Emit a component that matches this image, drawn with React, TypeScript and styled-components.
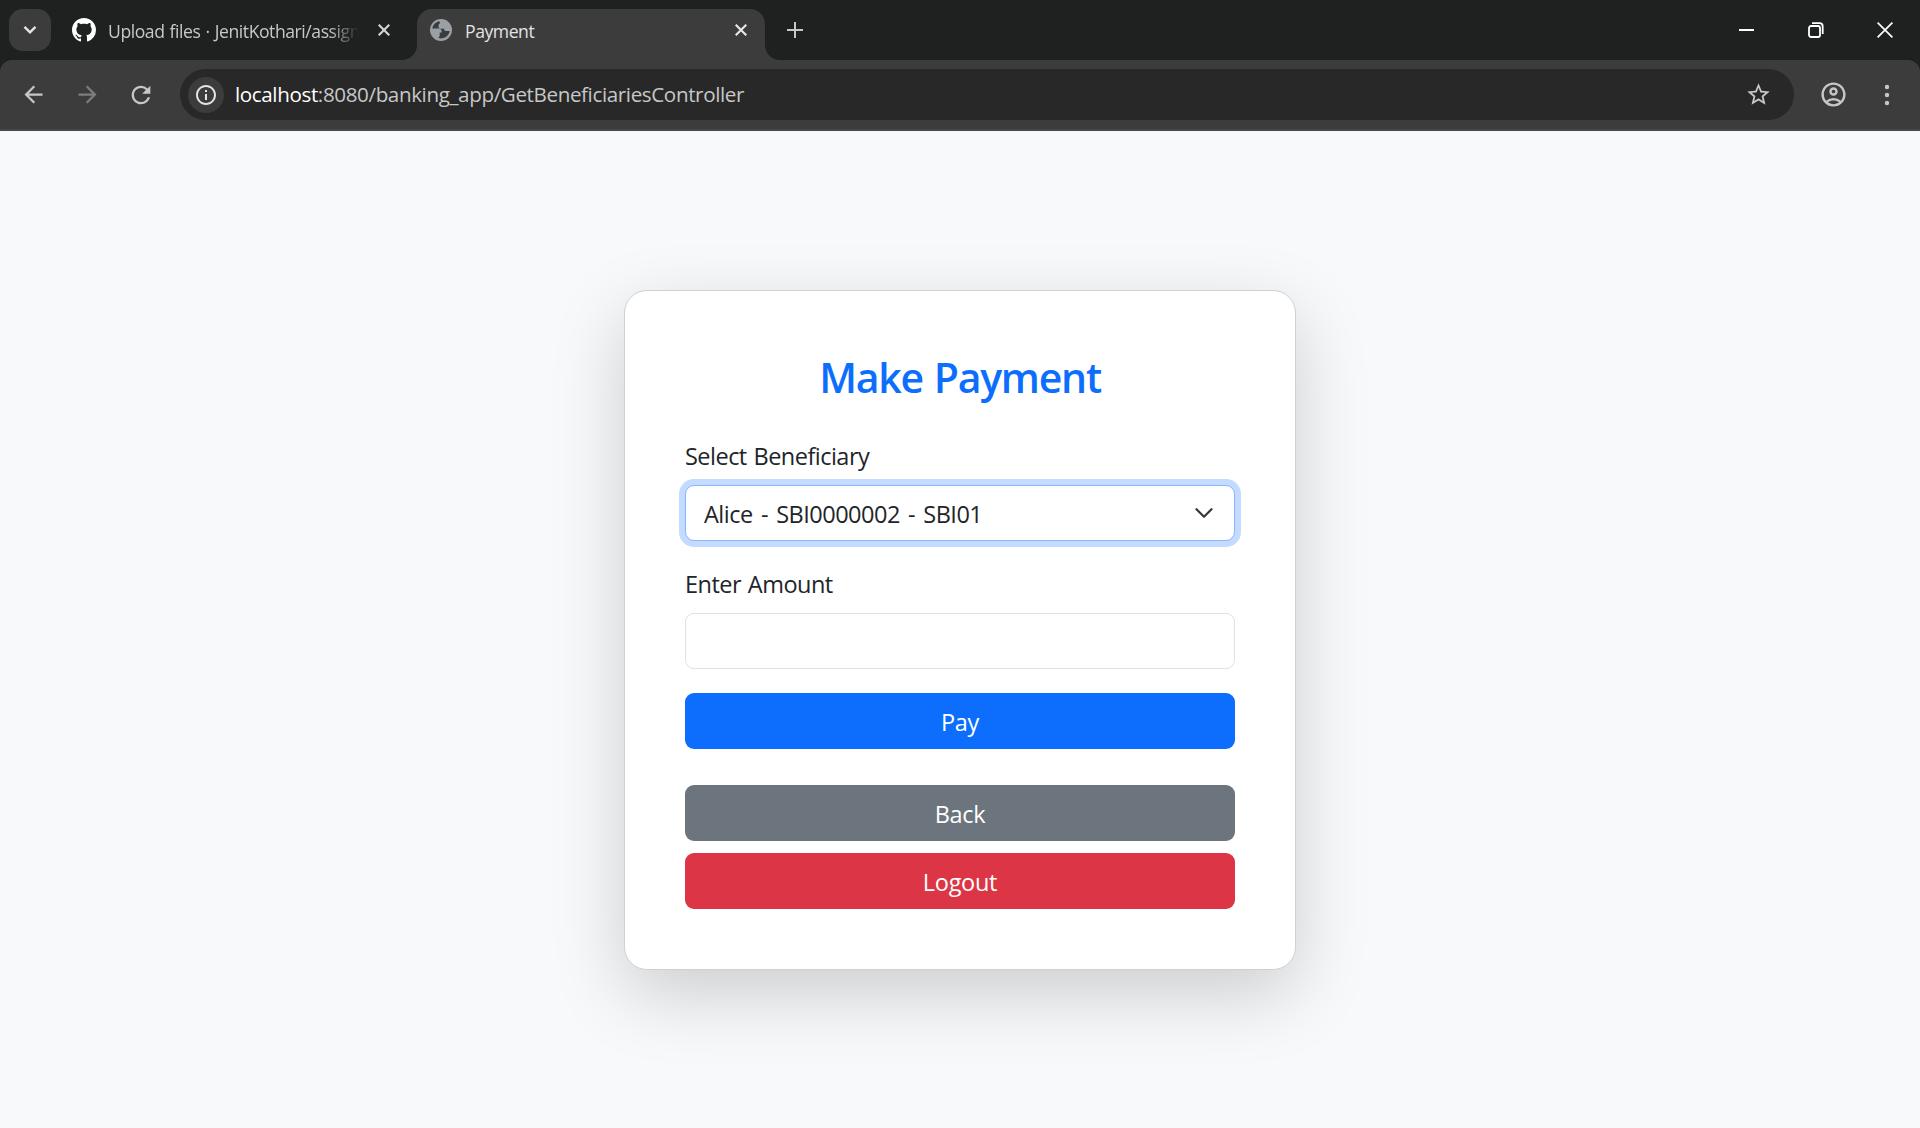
import React from "react";
import styled, { createGlobalStyle } from "styled-components";
import {
  MdArrowBack,
  MdArrowForward,
  MdInfoOutline,
  MdOutlineAccountCircle,
  MdRefresh,
  MdStarBorder,
} from "react-icons/md";

const GlobalStyle = createGlobalStyle`
  *, *::before, *::after { box-sizing: border-box; }
  body { margin: 0; background: #f8f9fa; font-family: "Open Sans", "Noto Sans", sans-serif; color: #212529; }
`;

const Window = styled.div`
  height: 1128px;
  display: flex;
  flex-direction: column;
  overflow: hidden;
`;

const TabStrip = styled.header`
  height: 60px;
  flex: none;
  background: #1f2120;
  display: flex;
  padding-left: 9px;
`;

const TabSearch = styled.button`
  width: 42px;
  height: 42px;
  margin-top: 9px;
  padding: 0;
  border: 0;
  border-radius: 14px;
  background: #3c3c3c;
  display: grid;
  place-items: center;
`;

const Tab = styled.div<{ $active?: boolean }>`
  position: relative;
  width: ${(p) => (p.$active ? 348 : 351)}px;
  height: 51px;
  margin-top: 9px;
  margin-left: ${(p) => (p.$active ? 0 : 15)}px;
  padding: 0 ${(p) => (p.$active ? 18 : 27)}px 9px ${(p) => (p.$active ? 13 : 6)}px;
  display: flex;
  align-items: center;
  background: ${(p) => (p.$active ? "#3c3c3c" : "transparent")};
  border-radius: 15px 15px 0 0;
  color: ${(p) => (p.$active ? "#e3e3e3" : "#c7c7c7")};

  &::before, &::after {
    content: ${(p) => (p.$active ? '""' : "none")};
    position: absolute;
    bottom: 0;
    width: 15px;
    height: 15px;
  }
  &::before { left: -15px; background: radial-gradient(circle at 0 0, transparent 14.5px, #3c3c3c 15.5px); }
  &::after { right: -15px; background: radial-gradient(circle at 100% 0, transparent 14.5px, #3c3c3c 15.5px); }
`;

const TabTitle = styled.span<{ $gap: number; $fade?: boolean }>`
  flex: 1;
  min-width: 0;
  margin: 2px 17px 0 ${(p) => p.$gap}px;
  white-space: nowrap;
  font-size: 17.6px;
  line-height: 26px;
  letter-spacing: -0.45px;
  word-spacing: 1px;
  ${(p) => p.$fade && "mask-image: linear-gradient(to right, #000 calc(100% - 32px), transparent calc(100% - 2px));"}
`;

const NewTab = styled.div`
  margin: 21px 0 0 21px;
  height: 18px;
`;

const WindowButtons = styled.div`
  margin-left: auto;
  padding-right: 1px;
  display: flex;
  height: 60px;
  align-items: center;
`;

const WindowButton = styled.div`
  width: 69px;
  display: grid;
  place-items: center;
`;

const ToolbarBack = styled.div`
  flex: none;
  background: #1f2120;
`;

const Toolbar = styled.div`
  height: 71px;
  background: #3c3c3c;
  border-radius: 12px 12px 0 0;
  box-shadow: inset 0 -2px 0 #484848;
  display: flex;
  align-items: center;
  padding: 0 0 2px 19px;
`;

const NavIcon = styled.div<{ $dim?: boolean }>`
  width: 28px;
  height: 28px;
  margin-right: 26px;
  display: grid;
  place-items: center;
  color: ${(p) => (p.$dim ? "#7d7d7d" : "#c7c7c7")};
`;

const Omnibox = styled.div`
  flex: none;
  width: 1614px;
  height: 51px;
  margin-left: -1px;
  border-radius: 26px;
  background: #282828;
  display: flex;
  align-items: center;
  padding: 0 22px 0 8px;
  color: #c7c7c7;
`;

const SiteInfo = styled.span`
  width: 36px;
  height: 36px;
  border-radius: 50%;
  background: #3c3c3c;
  color: #e3e3e3;
  display: grid;
  place-items: center;
`;

const Url = styled.span`
  margin: 0 0 2px 11px;
  flex: 1;
  font-size: 20.6px;
  line-height: 30px;
  letter-spacing: -0.38px;
`;

const Host = styled.span`
  color: #fff;
`;

const ToolbarEnd = styled.div`
  display: flex;
  align-items: center;
  padding-left: 25px;
  gap: 28px;
  color: #c7c7c7;
`;

const Page = styled.main`
  flex: 1;
  display: flex;
  justify-content: center;
  align-items: flex-start;
  padding-top: 159px;
  background: #f8f9fa;
`;

const Card = styled.section`
  width: 672px;
  height: 680px;
  padding: 60px;
  background: #fff;
  border: 1px solid #cfd0d1;
  border-radius: 23px;
  box-shadow: 0 24px 72px rgba(0, 0, 0, 0.175);
`;

const Title = styled.h3`
  margin: 0 0 36px;
  height: 50px;
  font-size: 41px;
  line-height: 53px;
  font-weight: 600;
  letter-spacing: -1.25px;
  word-spacing: 1.5px;
  text-align: center;
  color: #0d6efd;
`;

const Field = styled.div`
  margin-bottom: 24px;
`;

const Label = styled.label`
  display: block;
  height: 36px;
  margin-bottom: 12px;
  font-size: 23.5px;
  line-height: 38px;
  letter-spacing: -0.52px;
  word-spacing: 1.2px;
`;

const Control = styled.div<{ $focused?: boolean }>`
  height: 56px;
  display: flex;
  align-items: center;
  justify-content: space-between;
  padding: 0 18px;
  border: 1px solid ${(p) => (p.$focused ? "#86b7fe" : "#dee2e6")};
  border-radius: 9px;
  background: #fff;
  box-shadow: ${(p) => (p.$focused ? "0 0 0 6px #c2dbff" : "none")};
`;

const Value = styled.span`
  padding-top: 2px;
  font-size: 23.5px;
  line-height: 36px;
  letter-spacing: -0.5px;
  word-spacing: 2.6px;
`;

const Button = styled.button<{ $color: string; $gap?: number }>`
  display: block;
  width: 100%;
  height: 56px;
  margin: 0 0 ${(p) => p.$gap ?? 0}px;
  padding: 2px 0 0;
  border: 0;
  border-radius: 9px;
  background: ${(p) => p.$color};
  color: #fff;
  font-family: inherit;
  font-size: 23.5px;
  line-height: 36px;
  letter-spacing: -0.3px;
`;

const Close = ({ color }: { color: string }) => (
  <svg width="12" height="12" viewBox="0 0 12 12" fill="none" stroke={color} strokeWidth="2.1">
    <path d="M.7.7 11.3 11.3M11.3.7.7 11.3" />
  </svg>
);

const Globe = () => (
  <svg width="22" height="22" viewBox="0 0 22 22">
    <circle cx="11" cy="11" r="11" fill="#9aa0a6" />
    <path
      fill="#3c3c3c"
      d="M9.300 2.300C5.600 3 2.900 5.900 2.300 9.500h6.200c1.900 0 3.200 1.200 3.200 2.800v1.200h-2v3c0 1-.7 1.700-1.700 1.900 1.200.7 2.200 1 3.400 1 4.400-.2 7.800-3.200 8.300-7.300h-3.200c-1.500 0-2.500-1-2.500-2.400H10.700c-1.300 0-2.100-.8-2.100-2V6.300c0-1 .7-1.700 1.600-1.700Z"
    />
  </svg>
);

export default function App() {
  return (
    <Window>
      <GlobalStyle />
      <TabStrip>
        <TabSearch>
          <svg width="14" height="10" viewBox="0 0 14 10" fill="none" stroke="#e3e3e3" strokeWidth="2.4">
            <path d="m1.5 1.8 5.5 5.5 5.5-5.5" />
          </svg>
        </TabSearch>
        <Tab>
          <svg width="24" height="24" viewBox="0 0 16 16" fill="#fff">
            <path d="M8 0C3.58 0 0 3.58 0 8c0 3.54 2.29 6.53 5.47 7.59.4.07.55-.17.55-.38 0-.19-.01-.82-.01-1.49-2.01.37-2.53-.49-2.69-.94-.09-.23-.48-.94-.82-1.13-.28-.15-.68-.52-.01-.53.63-.01 1.08.58 1.23.82.72 1.21 1.87.87 2.33.66.07-.52.28-.87.51-1.07-1.78-.2-3.64-.89-3.64-3.95 0-.87.31-1.59.82-2.15-.08-.2-.36-1.02.08-2.12 0 0 .67-.21 2.2.82.64-.18 1.32-.27 2-.27s1.36.09 2 .27c1.53-1.04 2.2-.82 2.2-.82.44 1.1.16 1.92.08 2.12.51.56.82 1.27.82 2.15 0 3.07-1.87 3.75-3.65 3.95.29.25.54.73.54 1.48 0 1.07-.01 1.93-.01 2.2 0 .21.15.46.55.38A8.01 8.01 0 0 0 16 8c0-4.42-3.58-8-8-8" />
          </svg>
          <TabTitle $gap={12} $fade>Upload files · JenitKothari/assign</TabTitle>
          <Close color="#d6d6d6" />
        </Tab>
        <Tab $active>
          <Globe />
          <TabTitle $gap={13}>Payment</TabTitle>
          <Close color="#e8e8e8" />
        </Tab>
        <NewTab>
          <svg width="18" height="18" viewBox="0 0 18 18" stroke="#c7c7c7" strokeWidth="2">
            <path d="M9 1v16M1 9h16" />
          </svg>
        </NewTab>
        <WindowButtons>
          <WindowButton>
            <svg width="15" height="15" viewBox="0 0 15 15"><path d="M0 6h15v2H0z" fill="#fff" /></svg>
          </WindowButton>
          <WindowButton>
            <svg width="16" height="16" viewBox="0 0 16 16" fill="none" stroke="#fff" strokeWidth="1.8">
              <rect x="1" y="4" width="11" height="11" rx="2" />
              <path d="M4 1.2h7.5a3.2 3.2 0 0 1 3.2 3.2V12" />
            </svg>
          </WindowButton>
          <WindowButton>
            <svg width="16" height="16" viewBox="0 0 16 16" stroke="#fff" strokeWidth="1.7">
              <path d="m.6.6 14.8 14.8M15.4.6.6 15.4" />
            </svg>
          </WindowButton>
        </WindowButtons>
      </TabStrip>
      <ToolbarBack>
        <Toolbar>
          <NavIcon><MdArrowBack size={27} /></NavIcon>
          <NavIcon $dim><MdArrowForward size={27} /></NavIcon>
          <NavIcon><MdRefresh size={28} /></NavIcon>
          <Omnibox>
            <SiteInfo><MdInfoOutline size={24} /></SiteInfo>
            <Url><Host>localhost</Host>:8080/banking_app/GetBeneficiariesController</Url>
            <MdStarBorder size={27} />
          </Omnibox>
          <ToolbarEnd>
            <MdOutlineAccountCircle size={29} />
            <svg width="22" height="22" viewBox="0 0 22 22" fill="currentColor">
              <circle cx="11" cy="3" r="2.200" /><circle cx="11" cy="11" r="2.200" /><circle cx="11" cy="19" r="2.200" />
            </svg>
          </ToolbarEnd>
        </Toolbar>
      </ToolbarBack>
      <Page>
        <Card>
          <Title>Make Payment</Title>
          <Field>
            <Label>Select Beneficiary</Label>
            <Control $focused>
              <Value>Alice - SBI0000002 - SBI01</Value>
              <svg width="24" height="18" viewBox="0 0 16 12" fill="none" stroke="#343a40" strokeWidth="1.500" strokeLinecap="round" strokeLinejoin="round">
                <path d="m3 3.500 5 5 5-5" />
              </svg>
            </Control>
          </Field>
          <Field>
            <Label>Enter Amount</Label>
            <Control />
          </Field>
          <Button $color="#0d6efd" $gap={36}>Pay</Button>
          <Button $color="#6c757d" $gap={12}>Back</Button>
          <Button $color="#dc3545">Logout</Button>
        </Card>
      </Page>
    </Window>
  );
}
